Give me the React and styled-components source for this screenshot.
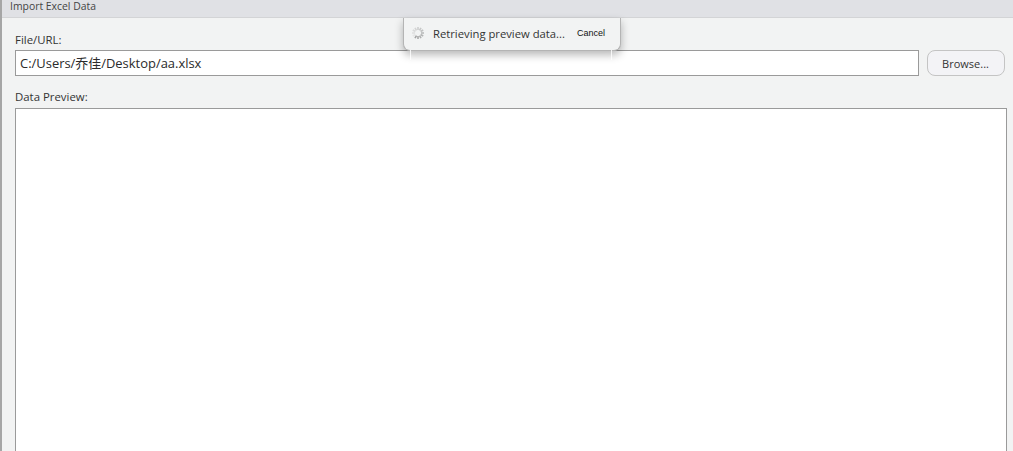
import React from 'react'
import styled, { createGlobalStyle } from 'styled-components'

const Global = createGlobalStyle`
  html, body { margin: 0; padding: 0; height: 100%; overflow: hidden; background: #f2f3f3; }
  #root { height: 100%; }
`

const Dialog = styled.div`
  position: relative;
  height: 451px;
  display: flex;
  flex-direction: column;
  background: #f2f3f3;
  border-left: 2px solid #a6a6a6;
  box-sizing: border-box;
  font-family: "Open Sans", "Noto Sans CJK SC", sans-serif;
  color: #333;
  overflow: hidden;
`

const TitleBar = styled.div`
  height: 17px;
  flex: none;
  background: #e0e1e5;
  border-bottom: 1px solid #d3d4d6;
  padding-left: 8px;
  font-size: 10.4px;
  line-height: 12px;
  color: #444;
`

const Body = styled.div`
  flex: 1;
  min-height: 0;
  display: flex;
  flex-direction: column;
  padding: 14px 6px 0 13px;
`

const Label = styled.div`
  font-size: 11.4px;
  line-height: 16px;
  height: 18px;
  color: #333;
`

const FileRow = styled.div`
  display: flex;
  gap: 8px;
  margin-bottom: 13px;
`

const PathBox = styled.div`
  flex: 1;
  height: 26px;
  box-sizing: border-box;
  background: #fff;
  border: 1px solid #9a9a9a;
  padding-left: 4px;
  font-size: 12.95px;
  line-height: 24px;
  color: #2b2b2b;
`

const BrowseButton = styled.button`
  width: 78px;
  height: 26px;
  margin-right: 2px;
  padding: 0 1px 0 0;
  background: #f3f3f6;
  border: 1px solid #c4c4c4;
  border-radius: 8px;
  font-family: inherit;
  font-size: 11px;
  color: #333;
`

const Preview = styled.div`
  flex: 1;
  min-height: 0;
  margin-top: 1px;
  background: #fff;
  border: 1px solid #9a9a9a;
  border-bottom: none;
`

const Toast = styled.div`
  position: absolute;
  top: 18px;
  left: 401px;
  width: 218px;
  height: 33px;
  box-sizing: border-box;
  display: flex;
  align-items: center;
  padding: 0 0 2px 7px;
  background: #f2f3f3;
  border: 1px solid #b4b4b4;
  border-top: none;
  border-radius: 0 0 7px 7px;
  box-shadow: 0 4px 9px rgba(0, 0, 0, 0.28);

  &::before,
  &::after {
    content: '';
    position: absolute;
    top: 32px;
    width: 1px;
    height: 10px;
    background: rgba(255, 255, 255, 0.8);
  }
  &::before { left: 6px; }
  &::after { right: 8px; }
`

const Message = styled.span`
  margin-left: 8px;
  font-size: 11.25px;
  color: #333;
`

const CancelLink = styled.span`
  margin-left: 12px;
  font-family: "Liberation Sans", sans-serif;
  font-size: 9px;
  color: #111;
`

function Spinner() {
  const ticks = Array.from({ length: 12 }, (_, i) => i)
  return (
    <svg width="14" height="14" viewBox="0 0 14 14">
      {ticks.map(i => (
        <line
          key={i}
          x1="7"
          y1="1"
          x2="7"
          y2="4"
          stroke="#8a8a8a"
          strokeWidth="1.6"
          opacity={0.12 + (((i + 4) % 12) / 12) * 0.7}
          transform={`rotate(${i * 30} 7 7)`}
        />
      ))}
    </svg>
  )
}

export default function App() {
  return (
    <Dialog>
      <Global />
      <TitleBar>Import Excel Data</TitleBar>
      <Body>
        <Label>File/URL:</Label>
        <FileRow>
          <PathBox>C:/Users/乔佳/Desktop/aa.xlsx</PathBox>
          <BrowseButton>Browse...</BrowseButton>
        </FileRow>
        <Label>Data Preview:</Label>
        <Preview />
      </Body>
      <Toast>
        <Spinner />
        <Message>Retrieving preview data...</Message>
        <CancelLink>Cancel</CancelLink>
      </Toast>
    </Dialog>
  )
}
